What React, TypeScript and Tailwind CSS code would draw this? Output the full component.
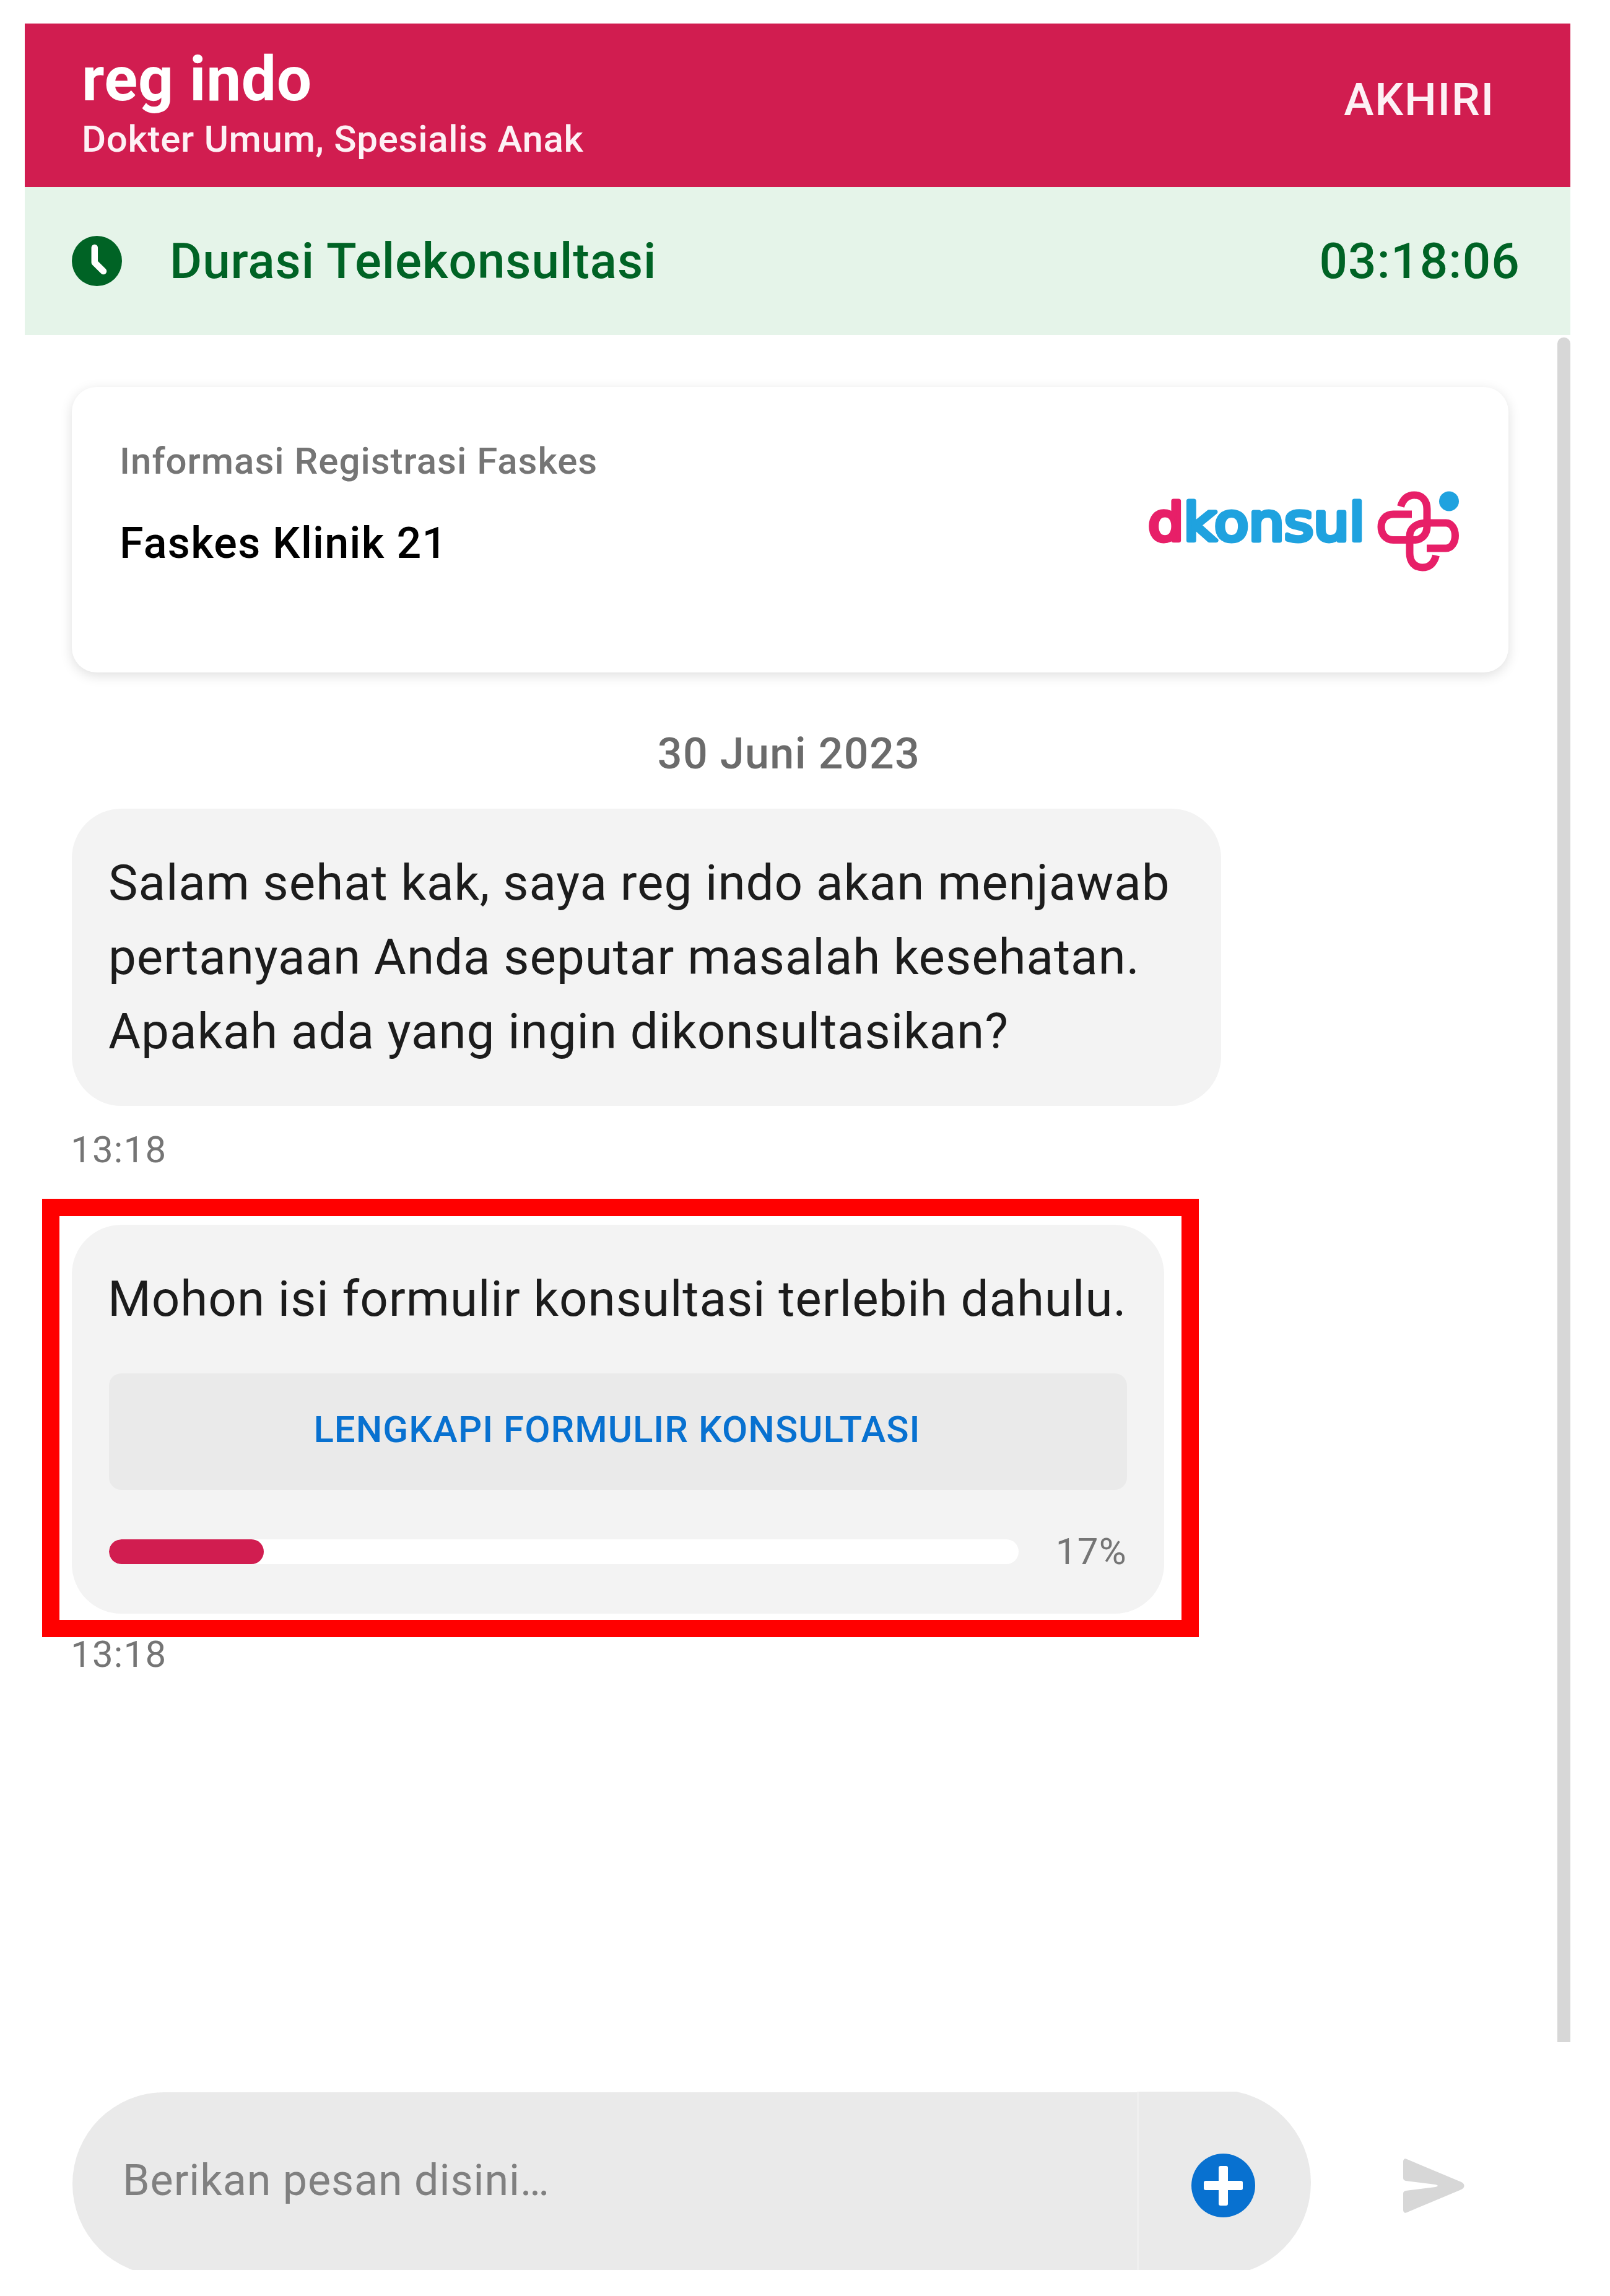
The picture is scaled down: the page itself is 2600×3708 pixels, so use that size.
import React from "react";

const PROGRESS = 17;

function ClockIcon() {
  return (
    <svg className="h-[81px] w-[81px] shrink-0" viewBox="0 0 81 81" fill="none">
      <circle cx="40.5" cy="40.5" r="40.5" fill="#006325" />
      <path d="M36.8 19V43L51 57" stroke="#fff" strokeWidth="10.5" strokeLinecap="round" strokeLinejoin="round" />
    </svg>
  );
}

function DkonsulLogo() {
  return (
    <svg className="h-[135px] w-[502px] shrink-0 overflow-visible" viewBox="0 0 502 135" fill="none">
      <text
        x="-2"
        y="83"
        fontSize="84"
        textLength="350"
        lengthAdjust="spacingAndGlyphs"
        strokeWidth="7"
        strokeLinejoin="round"
        strokeLinecap="round"
        fill="#1fa2df"
        stroke="#1fa2df"
        className="font-['DejaVu_Sans',sans-serif]"
      >
        <tspan fill="#e71f68" stroke="#e71f68">d</tspan>
        <tspan>konsul</tspan>
      </text>
      <g transform="translate(369 0)">
        <path
          d="M37 28C41 15 49 9.500 59 9.500C72 9.500 79.500 19 79.500 32V60C79.500 73 71 82 59 82H25C13 82 5.500 73 5.500 61S13 40.500 25 40.500H55"
          stroke="#e71f68"
          strokeWidth="12"
        />
        <path
          d="M79 95.500H110C119 95.500 125 86 125 75S119 54.500 110 54.500H79C62 54.500 51.500 63 51.500 76V103C51.500 118 60 126.500 72 126.500C83 126.500 91 120 94 107"
          stroke="#e71f68"
          strokeWidth="12"
        />
        <circle cx="115" cy="19.5" r="16" fill="#1fa2df" />
      </g>
    </svg>
  );
}

function PlusIcon() {
  return (
    <svg className="h-[103px] w-[103px]" viewBox="0 0 103 103">
      <circle cx="51.5" cy="51.500" r="51.5" fill="#0871d0" />
      <rect x="20" y="44" width="63" height="15" rx="3" fill="#fff" />
      <rect x="44" y="20" width="15" height="64" rx="3" fill="#fff" />
    </svg>
  );
}

function SendIcon() {
  return (
    <svg className="h-[88px] w-[100px]" viewBox="0 0 100 88">
      <path
        d="M0 5C0 1 3 -1 6 1L94 38C100 41 100 47 94 50L6 87C3 89 0 87 0 83V57C0 54 1 53 4 52L52 46C57 45 57 43 52 42L4 36C1 35 0 34 0 31Z"
        fill="#d7d7d7"
      />
    </svg>
  );
}

function Timestamp({ className }: { className: string }) {
  return <div className={`-ml-0.5 text-[60px] leading-[80px] tracking-[1.2px] text-[#757575] ${className}`}>13:18</div>;
}

export default function App() {
  return (
    <div className="h-[3708px] w-[2600px] overflow-hidden bg-white pl-10 pt-[38px] font-[Roboto,sans-serif]">
      <div className="flex w-[2496px] flex-col">
        <header className="flex h-[264px] items-start justify-between bg-[#d11d50] pl-[92px] pr-[122px] text-white">
          <div className="pt-10">
            <h1 className="text-[100px] font-bold leading-[100px] tracking-[0.6px]">reg indo</h1>
            <p className="mt-[7px] text-[60px] font-medium leading-[80px] tracking-[0.7px] text-[#fdf1f5]">
              Dokter Umum, Spesialis Anak
            </p>
          </div>
          <button className="mt-[73px] text-[73px] font-medium leading-[100px] tracking-[1.7px] text-[#fdf1f5]">
            AKHIRI
          </button>
        </header>

        <div className="flex h-[239px] items-center bg-[#e5f4e9] pl-[76px] pr-[81px] text-[80px] font-medium leading-[120px] text-[#006325]">
          <ClockIcon />
          <span className="ml-[77px] tracking-[0.95px]">Durasi Telekonsultasi</span>
          <span className="ml-auto tracking-[1.2px]">03:18:06</span>
        </div>

        <main className="flex h-[2757px] justify-between pl-[76px]">
          <div className="flex w-[2320px] flex-col items-start pt-[84px]">
            <section className="flex h-[461px] w-full items-start justify-between rounded-[40px] bg-white pl-[77px] pr-[78px] shadow-[0_5px_20px_rgba(0,0,0,0.13)]">
              <div className="pt-[75px]">
                <div className="text-[60px] font-medium leading-[90px] tracking-[1px] text-[#757575]">
                  Informasi Registrasi Faskes
                </div>
                <div className="mt-[37px] text-[70px] font-medium leading-[100px] tracking-[1.35px] text-black">
                  Faskes Klinik 21
                </div>
              </div>
              <div className="pt-[165px]">
                <DkonsulLogo />
              </div>
            </section>

            <div className="mt-[81px] w-full pr-[4px] text-center text-[70px] font-medium leading-[100px] tracking-[1.35px] text-[#6b6b6b]">
              30 Juni 2023
            </div>

            <div className="mt-[39px] w-[1856px] whitespace-nowrap rounded-[80px] bg-[#f3f3f3] px-[59px] py-[60px] text-[80px] leading-[120px] tracking-[0.93px] text-[#1c1c1c]">
              Salam sehat kak, saya reg indo akan menjawab
              <br />
              pertanyaan Anda seputar masalah kesehatan.
              <br />
              Apakah ada yang ingin dikonsultasikan?
            </div>
            <Timestamp className="mt-[31px]" />

            <div className="relative mt-[81px] w-[1764px] rounded-[80px] bg-[#f3f3f3] px-[60px] py-[60px]">
              <p className="-ml-0.5 whitespace-nowrap text-[80px] leading-[120px] tracking-[0.93px] text-[#1c1c1c]">
                Mohon isi formulir konsultasi terlebih dahulu.
              </p>
              <button className="mt-[60px] flex h-[188px] w-full items-center justify-center rounded-[20px] bg-[#eaeaea] pb-1.5 pr-[3px] text-[60px] font-medium leading-[80px] tracking-[1px] text-[#0871d0]">
                LENGKAPI FORMULIR KONSULTASI
              </button>
              <div className="mt-[60px] flex h-[80px] items-center gap-[60px]">
                <div className="h-10 flex-1 overflow-hidden rounded-[20px] bg-white">
                  <div className="h-full rounded-[20px] bg-[#d11d50]" style={{ width: `${PROGRESS}%` }} />
                </div>
                <span className="text-[60px] leading-[80px] tracking-[1.28px] text-[#757575]">{PROGRESS}%</span>
              </div>
              <div className="pointer-events-none absolute -bottom-[38px] -left-[48px] -right-[56px] -top-[42px] border-[28px] border-[#ff0000]" />
            </div>
            <Timestamp className="mt-[26px]" />
          </div>
          <div className="mt-1 w-[21px] rounded-t-[10px] bg-[#d7d7d7]" />
        </main>

        <footer className="flex items-start pl-[77px] pt-[80px]">
          <div className="flex h-[288px] w-[2000px] items-start overflow-hidden">
            <div className="mt-px h-[296px] flex-1 rounded-l-[148px] bg-[#eaeaea] pl-[81px] pt-[92px] text-[70px] leading-[100px] tracking-[0.95px] text-[#808080]">
              Berikan pesan disini…
            </div>
            <div className="-mt-[3px] flex h-[300px] w-[281px] items-center justify-center rounded-r-[150px] border-l-[3px] border-[#efefef] bg-[#eaeaea] pr-[6px] pt-2">
              <PlusIcon />
            </div>
          </div>
          <div className="ml-[149px] mt-[108px]">
            <SendIcon />
          </div>
        </footer>
      </div>
    </div>
  );
}
